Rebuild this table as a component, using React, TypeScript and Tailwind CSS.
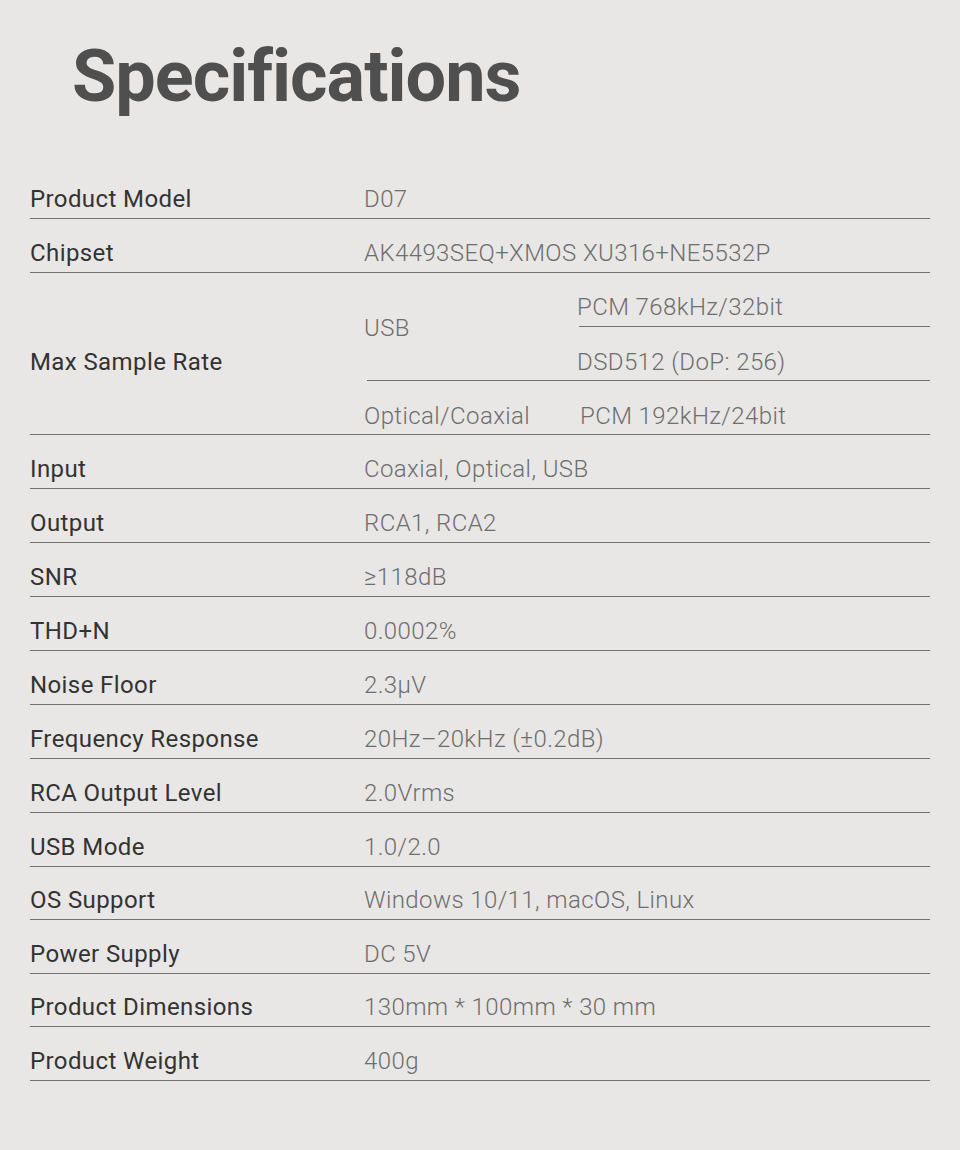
const SPECS_TOP = [
  { label: 'Product Model', value: 'D07' },
  { label: 'Chipset', value: 'AK4493SEQ+XMOS XU316+NE5532P' },
]

// corto = fila de 53px en vez de 54px (así caen las líneas como en la referencia)
const SPECS = [
  { label: 'Input', value: 'Coaxial, Optical, USB' },
  { label: 'Output', value: 'RCA1, RCA2' },
  { label: 'SNR', value: '≥118dB' },
  { label: 'THD+N', value: '0.0002%' },
  { label: 'Noise Floor', value: '2.3μV' },
  { label: 'Frequency Response', value: '20Hz–20kHz (±0.2dB)' },
  { label: 'RCA Output Level', value: '2.0Vrms' },
  { label: 'USB Mode', value: '1.0/2.0' },
  { label: 'OS Support', value: 'Windows 10/11, macOS, Linux', corto: true },
  { label: 'Power Supply', value: 'DC 5V' },
  { label: 'Product Dimensions', value: '130mm * 100mm * 30 mm', corto: true },
  { label: 'Product Weight', value: '400g' },
]

const label = 'text-[24px] leading-[26px] tracking-[0.4px] text-[#333333]'
const value = 'text-[24px] leading-[26px] tracking-[0.4px] font-light text-[#6e6e6e]'

function Fila({ etiqueta, valor, corto }: { etiqueta: string; valor: string; corto?: boolean }) {
  return (
    <div
      className={`flex items-end border-b border-[#717171] pb-[6px] ${corto ? 'h-[53px]' : 'h-[54px]'}`}
    >
      <span className={`w-[334px] shrink-0 ${label}`}>{etiqueta}</span>
      <span className={value}>{valor}</span>
    </div>
  )
}

export default function App() {
  return (
    <div className="min-h-[1150px] w-[960px] bg-[#e8e7e5] font-[family-name:Roboto,sans-serif] px-[30px]">
      {/* Título */}
      <h1 className="pt-[41px] pl-[42px] h-[165px] text-[72px] leading-[72px] font-bold text-[#4f4f4f] tracking-[-1px]">
        Specifications
      </h1>

      <div className="w-[900px]">
        {SPECS_TOP.map((s) => (
          <Fila key={s.label} etiqueta={s.label} valor={s.value} />
        ))}

        {/* Max Sample Rate */}
        <div className="flex h-[162px] border-b border-[#717171]">
          <div className="w-[334px] shrink-0 flex items-center pt-[17px]">
            <span className={label}>Max Sample Rate</span>
          </div>
          <div className="flex-1 flex flex-col">
            <div className="flex h-[108px] ml-[3px] border-b border-[#717171]">
              <div className="w-[213px] -ml-[3px] shrink-0 flex items-center pt-[3px]">
                <span className={value}>USB</span>
              </div>
              <div className="flex-1 flex flex-col">
                <div className="flex items-end h-[54px] ml-[2px] border-b border-[#717171] pb-[6px]">
                  <span className={`-ml-[2px] ${value}`}>PCM 768kHz/32bit</span>
                </div>
                <div className="flex items-end h-[53px] pb-[5px]">
                  <span className={value}>DSD512 (DoP: 256)</span>
                </div>
              </div>
            </div>
            <div className="flex items-end h-[53px] pb-[5px]">
              <span className={`w-[216px] shrink-0 ${value}`}>Optical/Coaxial</span>
              <span className={value}>PCM 192kHz/24bit</span>
            </div>
          </div>
        </div>

        {SPECS.map((s) => (
          <Fila key={s.label} etiqueta={s.label} valor={s.value} corto={s.corto} />
        ))}
      </div>
    </div>
  )
}
